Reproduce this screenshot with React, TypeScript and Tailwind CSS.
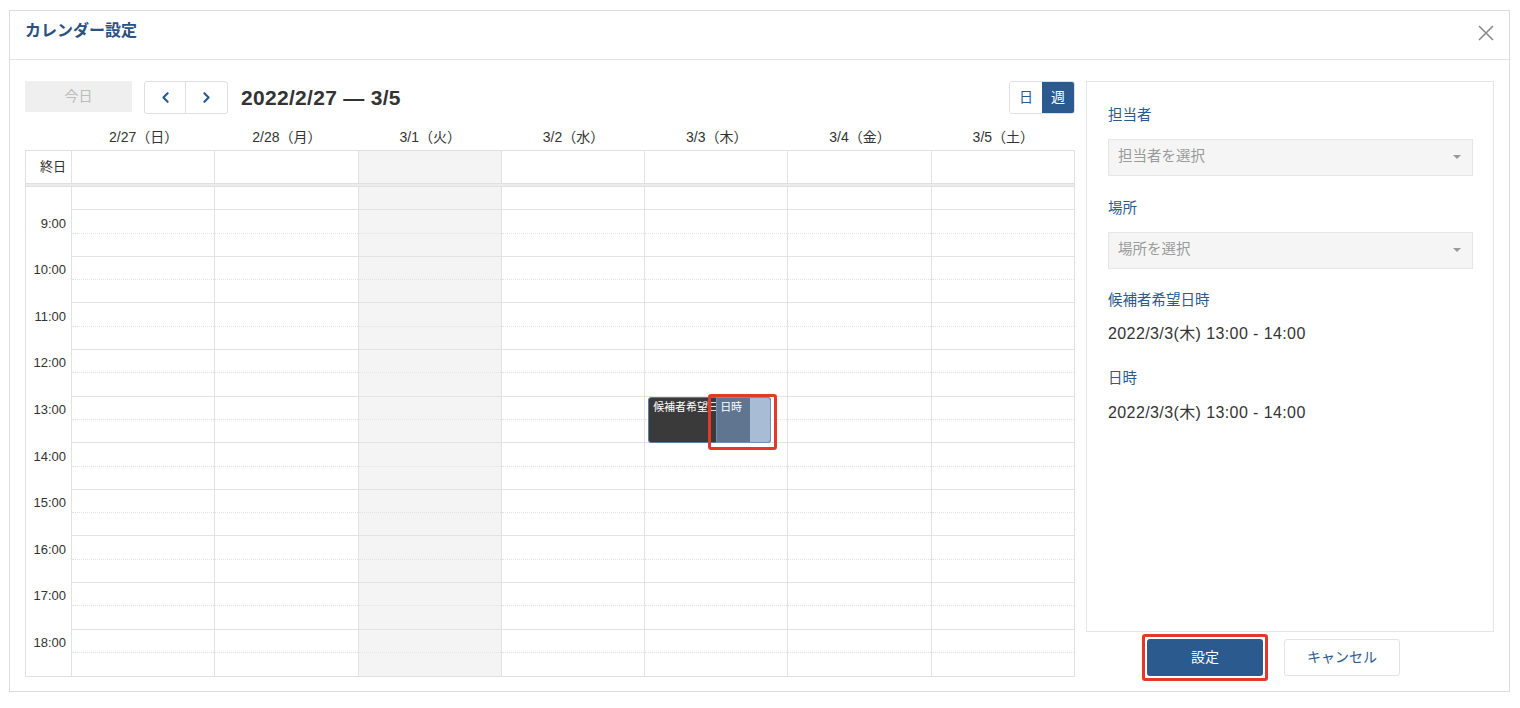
import { ChevronLeft, ChevronRight } from "lucide-react";

const days = ["2/27（日）", "2/28（月）", "3/1（火）", "3/2（水）", "3/3（木）", "3/4（金）", "3/5（土）"];
const TODAY = 2;
const EVENT_DAY = 4;
// 8:30 .. 19:00 in half hour slots
const slots = Array.from({ length: 21 }, (_, i) => i);

function TimeGutter() {
  return (
    <div className="flex w-[46px] shrink-0 flex-col border-r border-[#e2e2e2]">
      {slots.map((i) => (
        <div key={i} className="flex h-[23.3px] items-center justify-end pr-[5px] pt-[3px] text-[13px] text-[#333]">
          {i % 2 === 1 ? `${9 + (i - 1) / 2}:00` : ""}
        </div>
      ))}
    </div>
  );
}

function DayColumn({ index }: { index: number }) {
  const shaded = index === TODAY;
  return (
    <div
      className={`relative flex flex-1 flex-col ${index < 6 ? "border-r border-[#e2e2e2]" : ""} ${
        shaded ? "bg-[#f4f4f4]" : "bg-white"
      }`}
    >
      {slots.map((i) => (
        <div
          key={i}
          className={`h-[23.3px] shrink-0 ${
            i === 20
              ? ""
              : i % 2 === 0
                ? "border-b border-[#e3e3e3]"
                : "border-b border-dotted border-[#e3e3e3]"
          }`}
        />
      ))}
      {index === EVENT_DAY && (
        <>
          <div className="absolute left-[3px] top-[210px] h-[46px] w-[123px] overflow-hidden rounded-[3px] border border-[#5b7ea3] bg-[#3a3a3a]">
            <div className="whitespace-nowrap pl-[4px] pt-[2px] text-[11px] leading-[14px] text-white">候補者希望日時</div>
          </div>
          <div className="absolute left-[71px] top-[210px] flex h-[46px] w-[55px] overflow-hidden rounded-r-[3px] border border-[#6f8fb3]">
            <div className="w-[33px] bg-[#5f7590] pl-[3px] pt-[2px] text-[11px] leading-[14px] text-white">日時</div>
            <div className="flex-1 bg-[#a9bcd6]" />
          </div>
          <div className="absolute left-[63px] top-[207px] h-[56px] w-[69px] rounded-[3px] border-[3px] border-[#e5382c]" />
        </>
      )}
    </div>
  );
}

function SelectBox({ placeholder }: { placeholder: string }) {
  return (
    <div className="mt-[12px] flex h-[37px] w-[365px] items-center justify-between border border-[#e6e6e6] bg-[#f5f5f5] pl-[9px] pr-[11px]">
      <span className="text-[14.5px] text-[#9a9a9a]">{placeholder}</span>
      <span className="h-0 w-0 border-x-[4px] border-t-[4px] border-x-transparent border-t-[#9a9a9a]" />
    </div>
  );
}

export default function App() {
  return (
    <div
      className="h-[708px] w-[1520px] overflow-hidden bg-white pl-[9px] pt-[10px]"
      style={{ fontFamily: '"Liberation Sans", "Noto Sans CJK JP", sans-serif' }}
    >
      <div className="flex h-[682px] w-[1501px] flex-col border border-[#dcdcdc]">
        {/* header */}
        <div className="flex h-[49px] shrink-0 items-start justify-between border-b border-[#e3e3e3] pl-[15px] pr-[14px]">
          <h1 className="mt-[8px] text-[16px] font-bold text-[#2b5180]">カレンダー設定</h1>
          <svg width="18" height="18" viewBox="0 0 18 18" className="mt-[13px] text-[#8a8a8a]">
            <path d="M2 2 L16 16 M16 2 L2 16" stroke="currentColor" strokeWidth="1.6" fill="none" />
          </svg>
        </div>

        <div className="flex flex-1 gap-[11px] pl-[15px] pr-[15px] pt-[21px]">
          {/* calendar */}
          <div className="flex w-[1050px] shrink-0 flex-col">
            <div className="flex h-[33px] items-start">
              <button className="h-[31px] w-[107px] bg-[#efefef] text-[14px] text-[#bcbcbc]">今日</button>
              <div className="ml-[12px] flex h-[33px] rounded-[3px] border border-[#e0e0e0]">
                <button className="flex w-[41px] items-center justify-center border-r border-[#e0e0e0] text-[#2a5a8e]">
                  <ChevronLeft size={17} strokeWidth={3} />
                </button>
                <button className="flex w-[41px] items-center justify-center text-[#2a5a8e]">
                  <ChevronRight size={17} strokeWidth={3} />
                </button>
              </div>
              <div className="ml-[13px] self-center text-[21px] font-semibold tracking-[0.3px] text-[#333]">2022/2/27 — 3/5</div>
              <div className="ml-auto flex h-[33px] overflow-hidden rounded-[3px] border border-[#e0e0e0]">
                <button className="w-[32px] bg-white text-[14px] text-[#2a5a8e]">日</button>
                <button className="w-[32px] bg-[#2a5a8e] text-[14px] text-white">週</button>
              </div>
            </div>

            {/* day headers */}
            <div className="flex h-[36px] items-end pb-[2px] pl-[47px]">
              {days.map((d) => (
                <div key={d} className="flex-1 text-center text-[14px] text-[#333]">
                  {d}
                </div>
              ))}
            </div>

            <div className="flex flex-col border border-[#e0e0e0]">
              {/* all day row */}
              <div className="flex h-[33px] border-b border-[#e0e0e0]">
                <div className="flex w-[46px] items-center justify-end border-r border-[#e2e2e2] pr-[5px] text-[13px] text-[#333]">
                  終日
                </div>
                {days.map((d, i) => (
                  <div
                    key={d}
                    className={`flex-1 ${i < 6 ? "border-r border-[#e2e2e2]" : ""} ${i === TODAY ? "bg-[#f4f4f4]" : ""}`}
                  />
                ))}
              </div>
              <div className="h-[3px] border-b border-[#e0e0e0] bg-[#ececec]" />

              {/* time grid */}
              <div className="flex">
                <TimeGutter />
                {days.map((d, i) => (
                  <DayColumn key={d} index={i} />
                ))}
              </div>
            </div>
          </div>

          {/* side panel */}
          <div className="flex flex-1 flex-col">
            <div className="flex h-[551px] flex-col border border-[#e6e6e6] pl-[21px] pt-[23px]">
              <div className="text-[14.5px] text-[#2b5a8c]">担当者</div>
              <SelectBox placeholder="担当者を選択" />
              <div className="mt-[22px] text-[14.5px] text-[#2b5a8c]">場所</div>
              <SelectBox placeholder="場所を選択" />
              <div className="mt-[21px] text-[14.5px] text-[#2b5a8c]">候補者希望日時</div>
              <div className="mt-[11px] text-[16px] tracking-[0.4px] text-[#333]">2022/3/3(木) 13:00 - 14:00</div>
              <div className="mt-[22px] text-[14.5px] text-[#2b5a8c]">日時</div>
              <div className="mt-[11px] text-[16px] tracking-[0.4px] text-[#333]">2022/3/3(木) 13:00 - 14:00</div>
            </div>
            <div className="flex items-center gap-[16px] pl-[56px] pt-[2px]">
              <div className="rounded-[3px] border-[3px] border-[#e5382c] p-[2px]">
                <button className="h-[37px] w-[116px] rounded-[3px] bg-[#2a5a8e] text-[14px] text-white">設定</button>
              </div>
              <button className="h-[37px] w-[116px] rounded-[3px] border border-[#e3e3e3] bg-white text-[14px] text-[#2a5a8e]">
                キャンセル
              </button>
            </div>
          </div>
        </div>
      </div>
    </div>
  );
}
